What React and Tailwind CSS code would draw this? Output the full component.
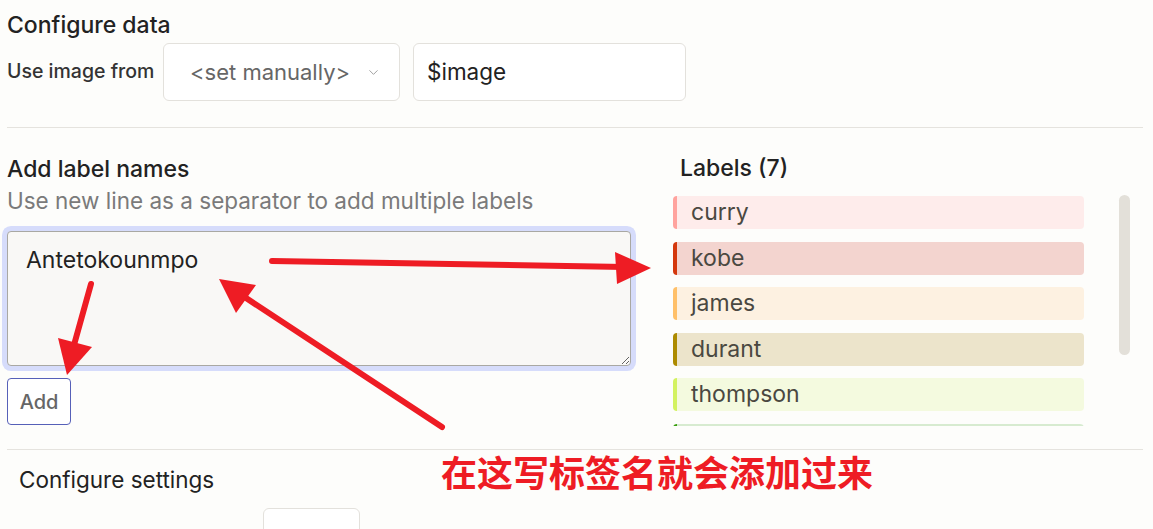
import { ChevronDown } from 'lucide-react';

const labels = [
  { name: 'curry', bar: 'border-l-[#ffa39e] bg-[#feeceb]' },
  { name: 'kobe', bar: 'border-l-[#d4380d] bg-[#f3d4cf]' },
  { name: 'james', bar: 'border-l-[#ffc069] bg-[#fdf1e1]' },
  { name: 'durant', bar: 'border-l-[#ad8b00] bg-[#ece4cb]' },
  { name: 'thompson', bar: 'border-l-[#d3f261] bg-[#f4fadf]' },
  { name: 'harden', bar: 'border-l-[#389e0d] bg-[#d7ebd0]' },
];

function Arrows() {
  return (
    <svg className="absolute inset-0 pointer-events-none" width="1153" height="529" viewBox="0 0 1153 529">
      <g stroke="#ee1c24" strokeWidth="6" strokeLinecap="round" fill="none">
        <line x1="272" y1="261" x2="625" y2="267" />
        <line x1="91" y1="284" x2="74" y2="345" />
        <line x1="442" y1="427" x2="240" y2="294" />
      </g>
      <g fill="#ee1c24">
        <polygon points="651,268 615,252 617,284" />
        <polygon points="67,375 58,338 92,347" />
        <polygon points="219,279 256,285 236,313" />
      </g>
    </svg>
  );
}

export default function App() {
  return (
    <div className="relative w-[1153px] h-[529px] overflow-hidden bg-[#fdfdfb] text-[#222] font-['Inter','Noto_Sans_CJK_SC',sans-serif]">
      <div className="pl-[7px] pr-[10px] pt-[11px]">
        <h2 className="text-[23px] leading-[28px] font-medium">Configure data</h2>
        <div className="flex items-center mt-[4px] h-[58px]">
          <span className="text-[19.5px] font-medium text-[#333] w-[156px]">Use image from</span>
          <div className="h-[58px] w-[237px] border border-[#e3e1dc] rounded-md bg-white flex items-center pl-[26px] pr-[18px] justify-between">
            <span className="text-[22px] text-[#666]">&lt;set manually&gt;</span>
            <ChevronDown size={15} strokeWidth={1.5} className="text-[#9a9a9a]" />
          </div>
          <div className="ml-[13px] h-[58px] w-[273px] border border-[#e3e1dc] rounded-md bg-white flex items-center pl-[13px]">
            <span className="text-[22.5px] text-[#222]">$image</span>
          </div>
        </div>
        <div className="mt-[26px] border-t border-[#e5e3de]" />

        <div className="flex mt-[27px]">
          <div className="w-[624px]">
            <h3 className="text-[23px] leading-[28px] font-medium">Add label names</h3>
            <p className="text-[22.5px] leading-[28px] mt-[4px] text-[#7a7a7a]">Use new line as a separator to add multiple labels</p>
            <textarea
              defaultValue="Antetokounmpo"
              className="block mt-[16px] w-[624px] h-[135px] rounded-[4px] border border-[#a9a8a3] bg-[#f9f8f6] shadow-[0_0_0_5px_#d6dcfb] outline-none pl-[18px] pt-[15px] text-[23px] leading-[26px] text-[#222] resize-y"
            />
            <button className="mt-[12px] w-[64px] h-[47px] rounded-[4px] border border-[#5660b8] bg-white text-[20px] font-medium text-[#666]">
              Add
            </button>
          </div>
          <div className="ml-[42px] flex-1">
            <h3 className="text-[23px] leading-[28px] font-medium pl-[7px] -mt-[1px]">Labels (7)</h3>
            <div className="flex mt-[13px]">
              <div className="w-[411px] h-[231px] overflow-hidden pt-[1px] flex flex-col gap-[12.5px]">
                {labels.map((l) => (
                  <div key={l.name} className={`shrink-0 h-[33px] rounded-[4px] border-l-4 flex items-center pl-[14px] text-[23px] text-[#4a4841] ${l.bar}`}>
                    {l.name}
                  </div>
                ))}
              </div>
              <div className="ml-[35px] w-[11px] h-[160px] rounded-full bg-[#e3e0d9]" />
            </div>
          </div>
        </div>

        <div className="mt-[23px] border-t border-[#e5e3de]" />
        <div className="pl-[12px] mt-[16px]">
          <h3 className="text-[22.5px] leading-[28px]">Configure settings</h3>
          <div className="ml-[244px] mt-[14px] w-[97px] h-[40px] border border-[#e3e1dc] rounded-md bg-white" />
        </div>
      </div>

      <Arrows />
      <div className="absolute left-[441px] top-[448px] text-[36px] leading-[46px] font-bold text-[#ee1c24] font-['Noto_Sans_CJK_SC',sans-serif]">
        在这写标签名就会添加过来
      </div>
    </div>
  );
}
